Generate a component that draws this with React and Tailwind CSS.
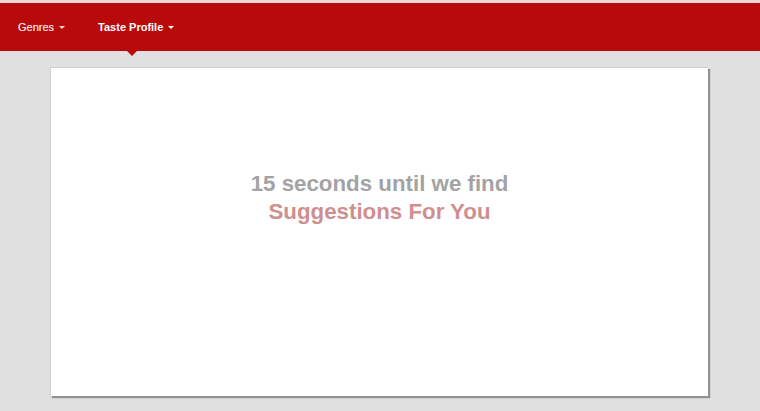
export default function App() {
  return (
    <div className="min-h-[411px] bg-[#e0e0e0] font-['Liberation_Sans',Arial,sans-serif]">
      <div className="h-[3px] bg-[#ecd6d6]" />
      <nav className="relative flex h-[48px] items-center bg-[#b8090b] pl-[18px] text-[11px]">
        <span className="flex items-center text-[#f7d6d6] [text-shadow:0_0_0.3px_#f7d6d6]">
          Genres
          <span className="ml-[5px] border-x-[3px] border-t-[3px] border-x-transparent border-t-[#f7d6d6]" />
        </span>
        <span className="relative ml-[33px] flex items-center font-bold text-white">
          Taste Profile
          <span className="ml-[5px] border-x-[3px] border-t-[3px] border-x-transparent border-t-white" />
          <span className="absolute left-[28px] top-[31px] border-x-[6px] border-t-[6px] border-x-transparent border-t-[#b8090b]" />
        </span>
      </nav>
      <div className="pt-[16px] pb-[14px] pl-[50px]">
        <div className="flex h-[329px] w-[658px] flex-col items-center border-l border-t border-[#cfcfcf] bg-white pt-[102px] text-[22.3px] font-bold leading-[28px] shadow-[2px_2px_1px_rgba(0,0,0,0.35)]">
          <p className="text-[#a3a3a3]">15 seconds until we find</p>
          <p className="text-[#cf8f8f]">Suggestions For You</p>
        </div>
      </div>
    </div>
  );
}
